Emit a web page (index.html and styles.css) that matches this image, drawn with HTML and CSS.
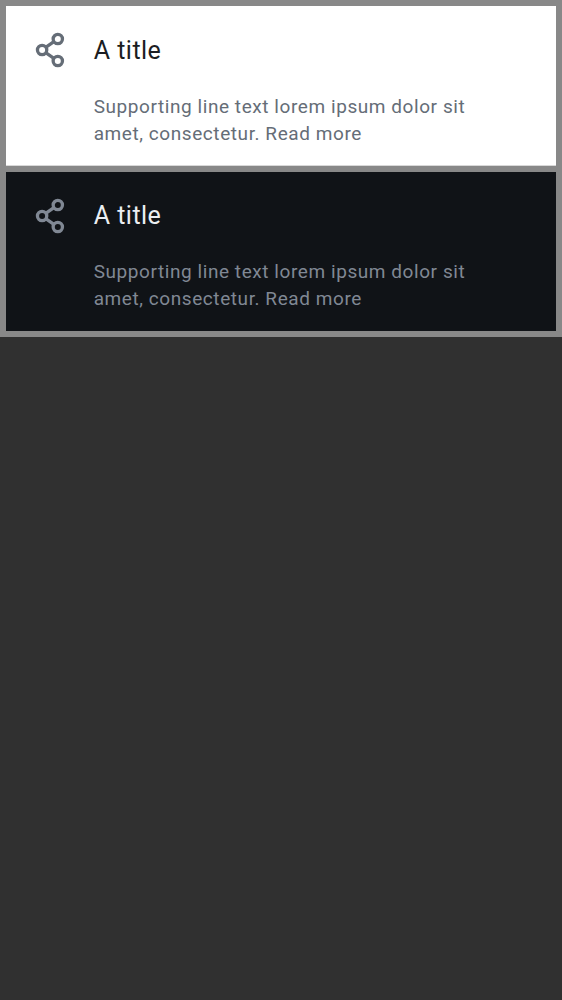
FILE: index.html
```html
<!DOCTYPE html>
<html lang="en">
<head>
<meta charset="utf-8">
<title>List items</title>
<link rel="stylesheet" href="styles.css">
</head>
<body>
<main class="gallery">
  <section class="item light">
    <svg class="icon" viewBox="0 0 32 38"><g fill="none" stroke="currentColor" stroke-width="3.3"><circle cx="23.8" cy="8" r="4.65"/><circle cx="8.1" cy="19" r="4.65"/><circle cx="23.8" cy="30" r="4.65"/><path d="M11.7 16.3 19.9 10.7M11.7 21.7 19.9 27.3"/></g></svg>
    <div class="content">
      <h2 class="title">A title</h2>
      <p class="text">Supporting line text lorem ipsum dolor sit<br>amet, consectetur. Read more</p>
    </div>
  </section>
  <section class="item dark">
    <svg class="icon" viewBox="0 0 32 38"><g fill="none" stroke="currentColor" stroke-width="3.3"><circle cx="23.8" cy="8" r="4.65"/><circle cx="8.1" cy="19" r="4.65"/><circle cx="23.8" cy="30" r="4.65"/><path d="M11.7 16.3 19.9 10.7M11.7 21.7 19.9 27.3"/></g></svg>
    <div class="content">
      <h2 class="title">A title</h2>
      <p class="text">Supporting line text lorem ipsum dolor sit<br>amet, consectetur. Read more</p>
    </div>
  </section>
</main>
</body>
</html>
```

FILE: styles.css
```css
body { margin: 0; min-height: 1000px; background: #303030; font-family: Roboto, sans-serif; }
.gallery { display: flex; flex-direction: column; gap: 6px; padding: 6px 6px 6.4px; background: #888; }
.item { display: flex; box-sizing: border-box; height: 159.5px; padding: 25px 28px 0; }
.light { background: #fff; color: #656d77; box-shadow: inset 0 -1px #d8d8d8; }
.dark { background: #101317; color: #808894; }
.icon { width: 32px; height: 38px; flex: none; }
.content { margin-left: 27.7px; }
.title { margin: 5px 0 0; font-size: 25px; line-height: 30px; font-weight: 400; letter-spacing: 0.48px; color: #1b1d22; }
.dark .title { margin-top: 4.4px; color: #ebeef2; }
.text { margin: 28px 0 0; font-size: 19px; line-height: 26.5px; letter-spacing: 0.57px; white-space: nowrap; }
.dark .text { margin-top: 28.6px; }
```
